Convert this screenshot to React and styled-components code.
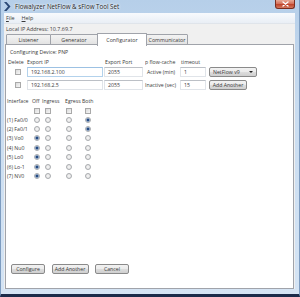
import React from 'react';
import styled, { createGlobalStyle } from 'styled-components';

const GlobalStyle = createGlobalStyle`
  html, body {
    margin: 0;
    padding: 0;
  }
  body {
    width: 300px;
    height: 297px;
    overflow: hidden;
    font-family: "Open Sans", "Noto Sans", sans-serif;
    color: #3a3a3a;
  }
`;

const Window = styled.div`
  width: 300px;
  height: 297px;
  box-sizing: border-box;
  display: flex;
  flex-direction: column;
  background: linear-gradient(to bottom, #b6cfe9 0%, #c9dcf0 35%, #d5e4f4 100%);
  border-left: 1px solid #7d9cc0;
  border-right: 1px solid #7d9cc0;
  border-bottom: 3px solid #1b2b4a;
  padding: 0 4px 5px 3px;
`;

const TitleBar = styled.div`
  height: 13px;
  flex: none;
  display: flex;
  align-items: center;
  gap: 4px;
`;

const TitleText = styled.span`
  font-size: 6.2px;
  color: #222;
  text-shadow: 0 0 3px #fff, 0 0 2px #fff;
  flex: 1;
`;

const CloseButton = styled.div`
  align-self: flex-start;
  width: 20px;
  height: 9px;
  box-sizing: border-box;
  border: 1px solid #7a2e20;
  border-top: none;
  border-radius: 0 0 3px 3px;
  background: linear-gradient(to bottom, #e8a996 0%, #d4725c 45%, #c0452c 55%, #d2785e 100%);
  display: flex;
  align-items: center;
  justify-content: center;
`;

const Client = styled.div`
  flex: 1;
  display: flex;
  flex-direction: column;
  background: #f0f0f0;
  min-height: 0;
`;

const MenuBar = styled.div`
  height: 11px;
  flex: none;
  display: flex;
  align-items: center;
  gap: 7px;
  padding-left: 2px;
  background: linear-gradient(to bottom, #f8fafd, #e9eef5);
  border-bottom: 1px solid #dfe4ea;
  box-sizing: border-box;
  font-size: 5.4px;
`;

const MenuItem = styled.span`
  &::first-letter {
    text-decoration: underline;
  }
`;

const InfoLine = styled.div`
  height: 9px;
  flex: none;
  display: flex;
  align-items: center;
  padding-left: 2px;
  font-size: 5.4px;
`;

const TabStrip = styled.div`
  height: 12px;
  flex: none;
  display: flex;
  align-items: flex-end;
  padding-left: 2px;
`;

const Tab = styled.div`
  position: relative;
  width: ${(p) => p.$w}px;
  height: ${(p) => (p.$active ? 13 : 11)}px;
  margin-left: -1px;
  margin-bottom: ${(p) => (p.$active ? -1 : 0)}px;
  box-sizing: border-box;
  border: 1px solid #a0a3aa;
  border-bottom: ${(p) => (p.$active ? 'none' : '1px solid #a0a3aa')};
  border-radius: 1px 1px 0 0;
  background: ${(p) =>
    p.$active ? '#fff' : 'linear-gradient(to bottom, #f3f3f3, #e3e3e3)'};
  z-index: ${(p) => (p.$active ? 1 : 0)};
  display: flex;
  align-items: center;
  justify-content: center;
  font-size: 5.3px;
  padding-bottom: ${(p) => (p.$active ? 1 : 0)}px;
  &:first-child {
    margin-left: 0;
  }
`;

const Panel = styled.div`
  flex: 1;
  margin: -1px 1px 0 1px;
  background: #fff;
  border: 1px solid #a0a3aa;
  display: flex;
  flex-direction: column;
  padding-top: 3px;
  font-size: 5.2px;
  min-height: 0;
`;

const DeviceLine = styled.div`
  height: 8px;
  line-height: 8px;
  margin-left: 4px;
`;

const ExportGrid = styled.div`
  display: grid;
  grid-template-columns: 19px 77px 41px 35px 29px 49px;
  grid-template-rows: 10px 13px 10px;
  align-items: start;
  margin: 1px 0 0 2px;
`;

const Head = styled.div`
  height: 10px;
  line-height: 10px;
  white-space: nowrap;
  overflow: hidden;
  padding-left: ${(p) => p.$indent || 0}px;
`;

const Cell = styled.div`
  height: 10px;
  display: flex;
  align-items: center;
  justify-content: ${(p) => (p.$center ? 'center' : 'flex-start')};
  padding-left: ${(p) => p.$indent || 0}px;
  white-space: nowrap;
`;

const TextBox = styled.div`
  width: ${(p) => p.$w}px;
  height: 10px;
  box-sizing: border-box;
  border: 1px solid ${(p) => (p.$focus ? '#b3d2ec' : '#e0e4e9')};
  border-top-color: ${(p) => (p.$focus ? '#9cc1e3' : '#bcc0c6')};
  background: #fff;
  padding-left: 3px;
  display: flex;
  align-items: center;
`;

const Select = styled.div`
  width: 48px;
  height: 10px;
  box-sizing: border-box;
  border: 1px solid #8a8a8a;
  border-radius: 2px;
  background: linear-gradient(to bottom, #f2f2f2 0%, #ebebeb 50%, #dddddd 51%, #cfcfcf 100%);
  display: flex;
  align-items: center;
  justify-content: space-between;
  padding: 0 3px 0 3px;
`;

const Arrow = styled.span`
  width: 0;
  height: 0;
  border-left: 2px solid transparent;
  border-right: 2px solid transparent;
  border-top: 2.5px solid #222;
`;

const Button = styled.div`
  width: ${(p) => p.$w}px;
  height: 10px;
  box-sizing: border-box;
  border: 1px solid #8a8a8a;
  border-radius: 2px;
  background: linear-gradient(to bottom, #f2f2f2 0%, #ebebeb 50%, #dddddd 51%, #cfcfcf 100%);
  display: flex;
  align-items: center;
  justify-content: center;
  white-space: nowrap;
`;

const CheckBox = styled.span`
  display: inline-block;
  width: 6px;
  height: 6px;
  box-sizing: border-box;
  border: 1px solid #a9a9a9;
  background: linear-gradient(to bottom right, #dadada, #f7f7f7);
  margin-left: ${(p) => p.$indent || 0}px;
`;

const Radio = styled.span`
  display: inline-block;
  width: 6px;
  height: 6px;
  box-sizing: border-box;
  border-radius: 50%;
  border: 1px solid #a8abae;
  background: ${(p) =>
    p.$on
      ? 'radial-gradient(circle, #1f3d6d 0, #2c5590 1.2px, #b9cbe2 1.8px, #eef2f7 3px)'
      : 'radial-gradient(circle, #f6f6f6 0, #e0e0e0 3px)'};
  margin-left: ${(p) => p.$indent || 0}px;
`;

const InterfaceGrid = styled.div`
  display: grid;
  grid-template-columns: 25px 10px 23px 17px 12px;
  grid-template-rows: 10px 9px;
  grid-auto-rows: 9.4px;
  align-items: center;
  margin: 6px 0 0 1px;
`;

const RowLabel = styled.div`
  white-space: nowrap;
`;

const Footer = styled.div`
  margin-top: auto;
  margin-bottom: 14px;
  margin-left: 5px;
  display: flex;
  gap: 6.5px;
`;

const columns = [
  { name: 'Off', indent: 2 },
  { name: 'Ingress', indent: 3 },
  { name: 'Egress', indent: 1 },
  { name: 'Both', indent: 3 },
];

const interfaces = [
  { label: '(1) Fa0/0', mode: 3 },
  { label: '(2) Fa0/1', mode: 3 },
  { label: '(3) Vo0', mode: 0 },
  { label: '(4) Nu0', mode: 0 },
  { label: '(5) Lo0', mode: 0 },
  { label: '(6) Lo-1', mode: 0 },
  { label: '(7) NV0', mode: 0 },
];

const tabs = [
  { name: 'Listener', w: 45 },
  { name: 'Generator', w: 48 },
  { name: 'Configurator', w: 50, active: true },
  { name: 'Communicator', w: 42 },
];

const AppIcon = () => (
  <svg width="7" height="9" viewBox="0 0 7 9">
    <polygon points="0,0 2.5,0 6.5,4.5 2.5,9 0,9 4,4.5" fill="#2a4774" />
  </svg>
);

const CloseGlyph = () => (
  <svg width="7" height="6" viewBox="0 0 7 6">
    <path d="M1 1 L6 5 M6 1 L1 5" stroke="#fff" strokeWidth="1.3" strokeLinecap="round" />
  </svg>
);

const App = () => {
  return (
    <>
      <GlobalStyle />
      <Window>
        <TitleBar>
          <AppIcon />
          <TitleText>Flowalyzer NetFlow &amp; sFlow Tool Set</TitleText>
          <CloseButton>
            <CloseGlyph />
          </CloseButton>
        </TitleBar>
        <Client>
          <MenuBar>
            <MenuItem>File</MenuItem>
            <MenuItem>Help</MenuItem>
          </MenuBar>
          <InfoLine>Local IP Address: 10.7.69.7</InfoLine>
          <TabStrip>
            {tabs.map((t) => (
              <Tab key={t.name} $w={t.w} $active={t.active}>
                {t.name}
              </Tab>
            ))}
          </TabStrip>
          <Panel>
            <DeviceLine>Configuring Device: PNP</DeviceLine>
            <ExportGrid>
              <Head>Delete</Head>
              <Head>Export IP</Head>
              <Head $indent={1}>Export Port</Head>
              <Head>p flow-cache</Head>
              <Head $indent={1}>timeout</Head>
              <Head />

              <Cell $center><CheckBox /></Cell>
              <Cell><TextBox $w={76} $focus>192.168.2.100</TextBox></Cell>
              <Cell><TextBox $w={39}>2055</TextBox></Cell>
              <Cell $indent={2}>Active (min)</Cell>
              <Cell><TextBox $w={26}>1</TextBox></Cell>
              <Cell>
                <Select>
                  NetFlow v9
                  <Arrow />
                </Select>
              </Cell>

              <Cell $center><CheckBox /></Cell>
              <Cell><TextBox $w={76}>192.168.2.5</TextBox></Cell>
              <Cell><TextBox $w={39}>2055</TextBox></Cell>
              <Cell>Inactive (sec)</Cell>
              <Cell><TextBox $w={26}>15</TextBox></Cell>
              <Cell><Button $w={38}>Add Another</Button></Cell>
            </ExportGrid>

            <InterfaceGrid>
              <RowLabel>Interface</RowLabel>
              {columns.map((c) => (
                <RowLabel key={c.name}>{c.name}</RowLabel>
              ))}

              <span />
              {columns.map((c) => (
                <Cell key={c.name}><CheckBox $indent={c.indent} /></Cell>
              ))}

              {interfaces.map((row) => (
                <React.Fragment key={row.label}>
                  <RowLabel>{row.label}</RowLabel>
                  {columns.map((c, i) => (
                    <Cell key={c.name}>
                      <Radio $indent={c.indent} $on={row.mode === i} />
                    </Cell>
                  ))}
                </React.Fragment>
              ))}
            </InterfaceGrid>

            <Footer>
              <Button $w={34}>Configure</Button>
              <Button $w={37}>Add Another</Button>
              <Button $w={34}>Cancel</Button>
            </Footer>
          </Panel>
        </Client>
      </Window>
    </>
  );
};

export default App;
